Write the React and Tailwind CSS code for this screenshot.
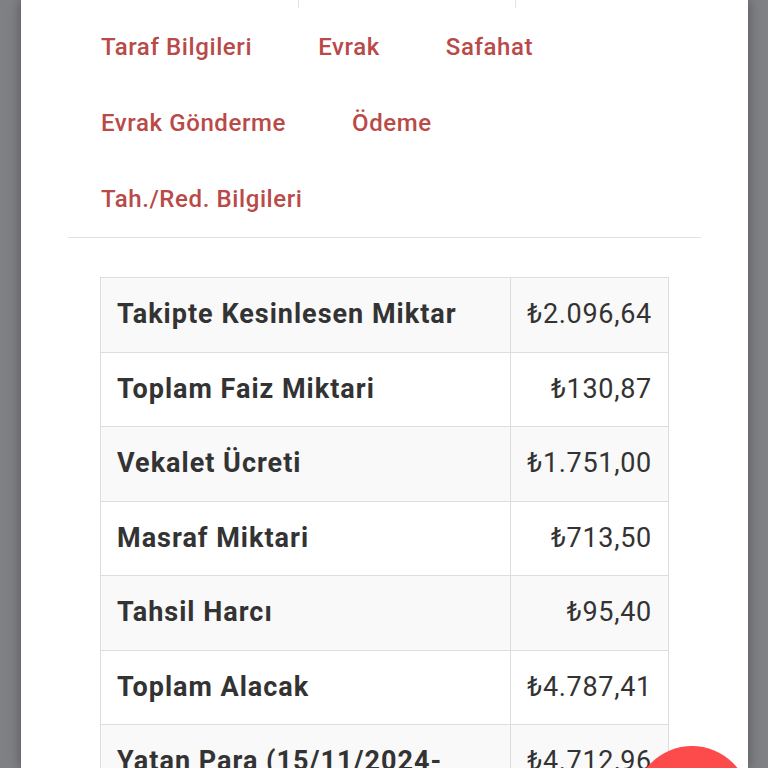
import React from 'react'

const tabs = [
    'Taraf Bilgileri',
    'Evrak',
    'Safahat',
    'Evrak Gönderme',
    'Ödeme',
    'Tah./Red. Bilgileri',
]

const rows = [
    { label: 'Takipte Kesinlesen Miktar', value: '₺2.096,64' },
    { label: 'Toplam Faiz Miktari', value: '₺130,87' },
    { label: 'Vekalet Ücreti', value: '₺1.751,00' },
    { label: 'Masraf Miktari', value: '₺713,50' },
    { label: 'Tahsil Harcı', value: '₺95,40' },
    { label: 'Toplam Alacak', value: '₺4.787,41' },
    { label: 'Yatan Para (15/11/2024-15/11/2024)', value: '₺4.712,96' },
]

const App = () => {
    return (
        <div
            className="relative h-[768px] overflow-hidden bg-[#7f8084] pl-[21px]"
            style={{ fontFamily: 'Roboto, "Liberation Sans", sans-serif' }}
        >
            <div className="h-full w-[727px] bg-white shadow-[0_0_12px_rgba(0,0,0,0.35)]">
                {/* active tab bottom */}
                <div className="h-[8px] pl-[277px]">
                    <div className="h-full w-[218px] border-x border-[#e3e3e3]" />
                </div>

                {/* links */}
                <div className="mx-[47px] flex flex-wrap border-b border-[#e2e2e2] pb-[1px]">
                    {tabs.map(t => (
                        <a
                            key={t}
                            className="flex h-[76px] items-center px-[33px] pt-[1px] text-[24px] font-medium tracking-[0.6px] text-[#b94a48]"
                        >
                            {t}
                        </a>
                    ))}
                </div>

                {/* totals */}
                <div className="mx-[79px] mt-[39px]">
                    <table className="w-full border-collapse border border-[#dddddd] text-[#333]">
                        <tbody>
                            {rows.map((r, i) => (
                                <tr key={r.label} className={i % 2 === 0 ? 'bg-[#f9f9f9]' : 'bg-white'}>
                                    <td className="w-[410px] border border-[#dddddd] px-[16px] py-[18px] align-top text-[27px] font-bold leading-[37.5px] tracking-[1px]">
                                        {r.label}
                                    </td>
                                    <td className="border border-[#dddddd] px-[16px] py-[18px] text-right align-top text-[27px] leading-[37.5px] tracking-[0.7px]">
                                        {r.value}
                                    </td>
                                </tr>
                            ))}
                        </tbody>
                    </table>
                </div>
            </div>

            {/* floating button */}
            <div className="absolute left-[634px] top-[746px] h-[116px] w-[116px] rounded-full bg-[#fd4b4b] shadow-md" />
        </div>
    )
}

export default App
